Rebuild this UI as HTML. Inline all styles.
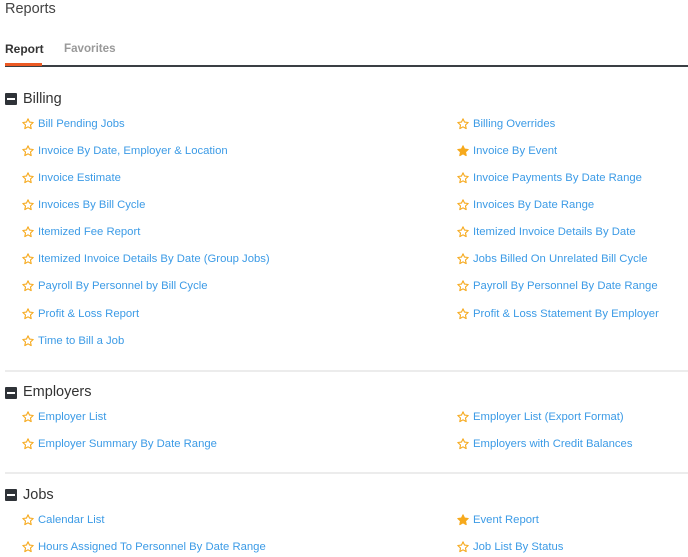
<!DOCTYPE html>
<html><head><meta charset="utf-8"><style>
body{margin:0;width:688px;height:557px;background:#fff;font-family:"Liberation Sans",sans-serif;position:relative;overflow:hidden}
.a{position:absolute;white-space:nowrap}
.t{font-size:14.5px;color:#444;}
.l{font-size:11.3px;color:#3c9be6;line-height:14px}
.h{font-size:14.5px;color:#333;line-height:18px}
.box{position:absolute;width:12px;height:12px;background:#2f3338;border-radius:1px}
.box:after{content:"";position:absolute;left:2px;right:2px;top:5px;height:2px;background:#fff}
svg.s{position:absolute;width:12px;height:12px}
.hr{position:absolute;left:5px;right:0;height:2px;background:#ececec}
</style></head><body>
<svg width="0" height="0" style="position:absolute"><defs>
<path id="st" d="M6 0.8 L7.55 4.1 L11.2 4.5 L8.5 7 L9.2 10.6 L6 8.8 L2.8 10.6 L3.5 7 L0.8 4.5 L4.45 4.1 Z"/></defs></svg>
<div class="a t" style="left:5px;top:1px">Reports</div>
<div class="a" style="left:5px;top:42px;font-size:12px;font-weight:bold;color:#333">Report</div>
<div class="a" style="left:64px;top:42px;font-size:11.6px;font-weight:bold;color:#999">Favorites</div>
<div class="a" style="left:5px;top:65px;width:683px;height:2px;background:#3a3f44"></div>
<div class="a" style="left:5px;top:63px;width:37px;height:3px;background:#ec5a24"></div>

<div class="box" style="left:5px;top:93px"></div><div class="a h" style="left:23px;top:90px">Billing</div>
<div class="hr" style="top:370px"></div>
<div class="box" style="left:5px;top:387px"></div><div class="a h" style="left:23px;top:383px">Employers</div>
<div class="hr" style="top:472px"></div>
<div class="box" style="left:5px;top:489px"></div><div class="a h" style="left:23px;top:486px">Jobs</div>

<div id="items"></div>
<script>
var L=[[123,"Bill Pending Jobs",0,"Billing Overrides",0],[150,"Invoice By Date, Employer & Location",0,"Invoice By Event",1],[177,"Invoice Estimate",0,"Invoice Payments By Date Range",0],[204,"Invoices By Bill Cycle",0,"Invoices By Date Range",0],[231,"Itemized Fee Report",0,"Itemized Invoice Details By Date",0],[258,"Itemized Invoice Details By Date (Group Jobs)",0,"Jobs Billed On Unrelated Bill Cycle",0],[285,"Payroll By Personnel by Bill Cycle",0,"Payroll By Personnel By Date Range",0],[313,"Profit & Loss Report",0,"Profit & Loss Statement By Employer",0],[340,"Time to Bill a Job",0,null,0],[416,"Employer List",0,"Employer List (Export Format)",0],[443,"Employer Summary By Date Range",0,"Employers with Credit Balances",0],[519,"Calendar List",0,"Event Report",1],[546,"Hours Assigned To Personnel By Date Range",0,"Job List By Status",0]];
var h="";
function it(x,y,t,f){return '<svg class="s" viewBox="0 0 12 12" style="left:'+x+'px;top:'+(y-5)+'px"><use href="#st" fill="'+(f?'#f6a91c':'none')+'" stroke="#f6a91c" stroke-width="1.1" stroke-linejoin="round"/></svg><div class="a l" style="left:'+(x+16)+'px;top:'+(y-6)+'px">'+t.replace(/&/g,'&amp;')+'</div>';}
L.forEach(function(r){h+=it(22,r[0],r[1],r[2]);if(r[3])h+=it(457,r[0],r[3],r[4]);});
document.getElementById("items").innerHTML=h;
</script>
</body></html>
